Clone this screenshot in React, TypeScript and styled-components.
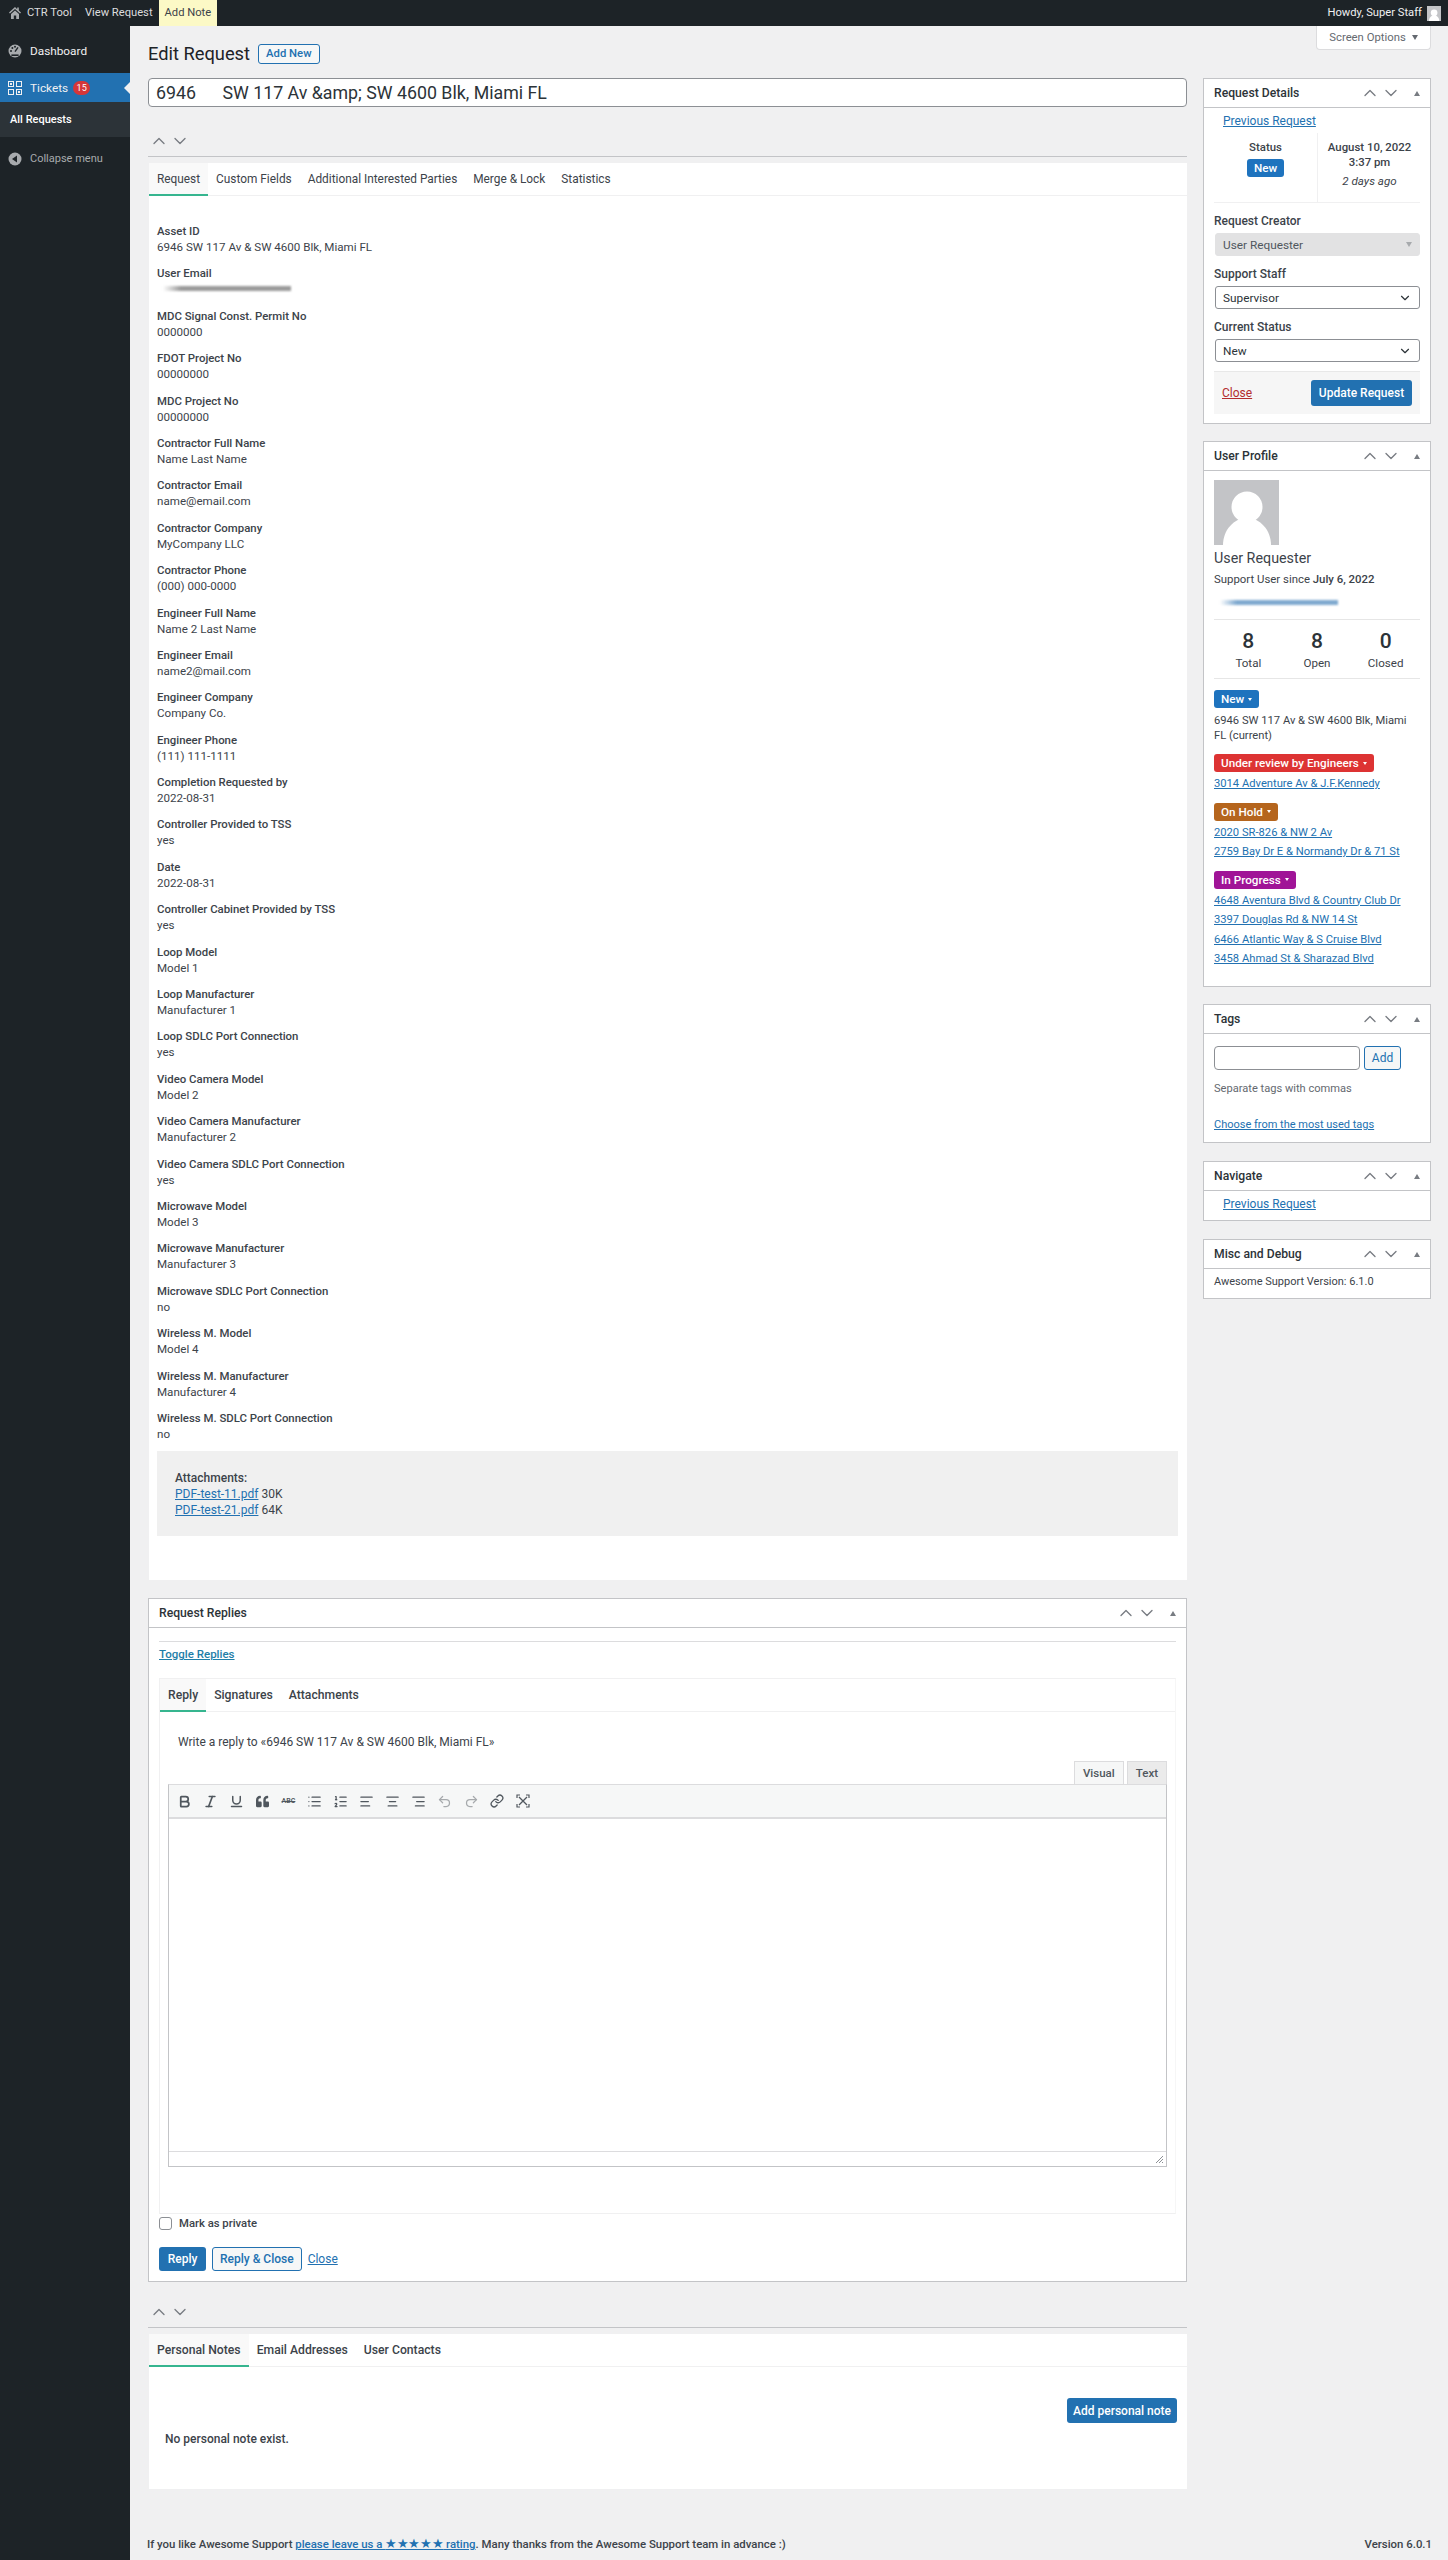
import React from 'react';
import styled, { createGlobalStyle } from 'styled-components';
import {
  AlignCenter,
  AlignLeft,
  AlignRight,
  Bold,
  ChevronDown,
  ChevronUp,
  Italic,
  Link as LinkIcon,
  List,
  ListOrdered,
  Redo2,
  Underline,
  Undo2
} from 'lucide-react';
import { FaQuoteLeft } from 'react-icons/fa';

const GlobalStyle = createGlobalStyle`
  html, body {
    margin: 0;
    padding: 0;
    background: #f0f0f1;
    color: #3c434a;
    font-family: Roboto, "Liberation Sans", sans-serif;
    font-size: 11.6px;
    line-height: 16px;
  }
  * { box-sizing: border-box; }
`;

const Page = styled.div`
  width: 1448px;
  height: 2560px;
  display: flex;
  flex-direction: column;
  overflow: hidden;
`;

const AdminBar = styled.div`
  height: 26px;
  flex: none;
  background: #1d2327;
  color: #f0f0f1;
  display: flex;
  align-items: stretch;
  padding-left: 8px;
  font-size: 11.2px;
`;

const BarItem = styled.div<{ $note?: boolean }>`
  display: flex;
  align-items: center;
  gap: 5px;
  padding: 0 6px;
  background: ${p => (p.$note ? '#fcf9c6' : 'transparent')};
  color: ${p => (p.$note ? '#3c434a' : '#dcdcde')};
`;

const BarHome = styled(BarItem)`
  padding: 0 7px 0 0;
`;

const BarRight = styled.div`
  margin-left: auto;
  display: flex;
  align-items: center;
  gap: 5px;
  padding-right: 7px;
  color: #f0f0f1;
`;

const BarAvatar = styled.div`
  width: 14px;
  height: 15px;
  background: #c3c4c7;
  display: flex;
  align-items: flex-end;
  justify-content: center;
  overflow: hidden;
`;

const Shell = styled.div`
  flex: 1;
  display: flex;
  min-height: 0;
`;

const Sidebar = styled.div`
  width: 130px;
  flex: none;
  background: #1d2327;
  color: #f0f0f1;
  font-size: 11.8px;
`;

const MenuItem = styled.div<{ $active?: boolean }>`
  position: relative;
  height: 29px;
  display: flex;
  align-items: center;
  gap: 8px;
  padding-left: 8px;
  background: ${p => (p.$active ? '#2271b1' : 'transparent')};
  color: #f0f0f1;
  margin-top: ${p => (p.$active ? '8px' : '10px')};
`;

const MenuNotch = styled.div`
  position: absolute;
  right: 0;
  top: 9px;
  border: 6px solid transparent;
  border-right-color: #f0f0f1;
  border-left-width: 0;
`;

const MenuBadge = styled.span`
  background: #d63638;
  color: #fff;
  font-size: 9px;
  line-height: 14px;
  width: 17px;
  height: 14px;
  border-radius: 7px;
  text-align: center;
  margin-left: -3px;
`;

const SubMenu = styled.div`
  height: 35px;
  background: #2c3338;
  display: flex;
  align-items: center;
  padding-left: 10px;
  color: #fff;
  font-weight: 500;
  font-size: 11px;
`;

const Collapse = styled.div`
  display: flex;
  align-items: center;
  gap: 8px;
  padding-left: 8px;
  margin-top: 12px;
  color: #a7aaad;
  height: 20px;
  font-size: 11px;
`;

const Main = styled.div`
  flex: 1;
  padding: 0 17px 0 18px;
  display: flex;
  flex-direction: column;
  min-width: 0;
`;

const TopRow = styled.div`
  height: 52px;
  display: flex;
  justify-content: space-between;
  align-items: flex-start;
`;

const TitleRow = styled.div`
  display: flex;
  align-items: center;
  gap: 8px;
  padding-top: 16px;
`;

const PageTitle = styled.h1`
  margin: 0;
  font-size: 18.3px;
  font-weight: 400;
  line-height: 23px;
  color: #1d2327;
`;

const OutlineButton = styled.div<{ $height?: number }>`
  height: ${p => p.$height ?? 20}px;
  padding: 0 7px;
  display: inline-flex;
  align-items: center;
  border: 1px solid #2271b1;
  border-radius: 3px;
  color: #2271b1;
  background: #f6f7f7;
  font-weight: 500;
  font-size: 12px;
`;

const AddNewButton = styled(OutlineButton)`
  font-size: 11.3px;
`;

const ScreenTab = styled.div`
  width: 115px;
  height: 24px;
  background: #fff;
  border: 1px solid #dcdcde;
  border-top: none;
  border-radius: 0 0 4px 4px;
  color: #646970;
  display: flex;
  align-items: center;
  justify-content: center;
  gap: 6px;
  font-size: 11.3px;
`;

const DownCaret = styled.span`
  width: 0;
  height: 0;
  border: 3.5px solid transparent;
  border-top: 5px solid #646970;
  border-bottom: 0;
`;

const Columns = styled.div`
  display: grid;
  grid-template-columns: 1039px 228px;
  column-gap: 16px;
  align-items: start;
`;

const Column = styled.div`
  display: flex;
  flex-direction: column;
  min-width: 0;
`;

const TitleInput = styled.div`
  height: 29px;
  background: #fff;
  border: 1px solid #8c8f94;
  border-radius: 4px;
  padding: 0 7px;
  display: flex;
  align-items: center;
  font-size: 17.8px;
  color: #2c3338;
  white-space: pre;
`;

const HandleRow = styled.div<{ $height: number }>`
  height: ${p => p.$height}px;
  display: flex;
  align-items: flex-end;
  gap: 1px;
  padding: 0 0 5px 1px;
  border-bottom: 1px solid #c3c4c7;
  color: #787c82;
`;

const TabPanel = styled.div<{ $height?: number; $top?: number }>`
  margin: ${p => p.$top ?? 6}px 0 0 1px;
  background: #fff;
  height: ${p => (p.$height ? `${p.$height}px` : 'auto')};
`;

const TabBar = styled.div`
  height: 33px;
  display: flex;
  border-bottom: 1px solid #f0f0f1;
`;

const Tab = styled.div<{ $active?: boolean; $strong?: boolean }>`
  height: 33px;
  padding: 0 8px;
  display: flex;
  align-items: center;
  font-size: ${p => (p.$strong ? '12.2px' : '11.85px')};
  font-weight: ${p => (p.$strong ? 500 : 400)};
  background: ${p => (p.$active ? '#f9f9f9' : 'transparent')};
  border-bottom: 2px solid ${p => (p.$active ? '#36b58f' : 'transparent')};
`;

const FieldList = styled.div`
  padding: 27px 9px 44px 8px;
`;

const Field = styled.div`
  height: 42.4px;
`;

const FieldLabel = styled.div`
  font-weight: 500;
  font-size: 11.4px;
`;

const Smudge = styled.div<{ $tone: string; $width: number; $top: number }>`
  width: ${p => p.$width}px;
  height: 5px;
  margin: ${p => p.$top}px 0 0 6px;
  background: linear-gradient(90deg, transparent, ${p => p.$tone} 14%, ${p => p.$tone});
  filter: blur(1px);
`;

const AttachmentBox = styled.div`
  background: #f0f0f0;
  padding: 19px 18px 18px;
  margin-top: -1px;
  font-size: 12px;
`;

const AttachmentLabel = styled(FieldLabel)`
  font-size: 12px;
`;

const Link = styled.a`
  color: #2271b1;
  text-decoration: underline;
`;

const Postbox = styled.div<{ $top?: number }>`
  margin-top: ${p => p.$top ?? 0}px;
  background: #fff;
  border: 1px solid #c3c4c7;
`;

const PostboxHeader = styled.div`
  height: 29px;
  border-bottom: 1px solid #c3c4c7;
  display: flex;
  align-items: center;
  padding-left: 10px;
  font-weight: 500;
  font-size: 12.2px;
  color: #2c3338;
`;

const HandleActions = styled.div`
  margin-left: auto;
  display: flex;
  align-items: center;
  gap: 1px;
  color: #787c82;
  padding-right: 10px;
`;

const UpCaret = styled.span`
  width: 0;
  height: 0;
  margin-left: 12px;
  border: 3.5px solid transparent;
  border-bottom: 5px solid #787c82;
  border-top: 0;
`;

const RepliesBody = styled.div`
  padding: 13px 10px 0 10px;
`;

const ThinRule = styled.div`
  height: 1px;
  background: #dcdcde;
`;

const ToggleLink = styled(Link)`
  display: block;
  margin-top: 4px;
  height: 17px;
  line-height: 17px;
  font-weight: 500;
  color: #1e7ea8;
  font-size: 11.5px;
`;

const ReplyTabs = styled.div`
  margin-top: 15px;
  height: 536px;
  border: 1px solid #f0f0f1;
  border-right-color: #f6f6f6;
`;

const ReplyIntro = styled.div`
  padding: 22px 0 0 18px;
  box-sizing: content-box;
  height: 16px;
  font-size: 12px;
`;

const EditorTabs = styled.div`
  display: flex;
  justify-content: flex-end;
  padding-right: 8px;
  margin-top: 11px;
  height: 23px;
  gap: 3px;
`;

const EditorTab = styled.div<{ $active?: boolean }>`
  height: 23px;
  padding: 0 8px;
  display: flex;
  align-items: center;
  font-weight: 500;
  font-size: 11.5px;
  color: #50575e;
  background: ${p => (p.$active ? '#f6f7f7' : '#ebebeb')};
  border: 1px solid #dcdcde;
  border-bottom: none;
`;

const Editor = styled.div`
  margin: 0 8px;
  height: 383px;
  border: 1px solid #c3c4c7;
  border-top: 1px solid #dcdcde;
  display: flex;
  flex-direction: column;
`;

const Toolbar = styled.div`
  height: 34px;
  flex: none;
  background: #f6f7f7;
  border-bottom: 2px solid #dcdcde;
  display: flex;
  align-items: center;
  padding-left: 2px;
  color: #50575e;
`;

const ToolButton = styled.div<{ $muted?: boolean }>`
  width: 26.1px;
  display: flex;
  align-items: center;
  justify-content: center;
  color: ${p => (p.$muted ? '#a7aaad' : '#50575e')};
`;

const StrikeText = styled.span`
  font-size: 7px;
  line-height: 10px;
  font-weight: 600;
  text-decoration: line-through;
`;

const EditorArea = styled.div`
  flex: 1;
  background: #fff;
`;

const StatusBar = styled.div`
  height: 15px;
  flex: none;
  border-top: 1px solid #dcdcde;
  display: flex;
  justify-content: flex-end;
  align-items: flex-end;
  padding: 0 2px 2px 0;
`;

const PrivateRow = styled.label`
  display: flex;
  align-items: center;
  gap: 7px;
  margin-top: 3px;
  height: 13px;
  font-weight: 500;
  font-size: 11.3px;
`;

const CheckBox = styled.span`
  width: 13px;
  height: 13px;
  border: 1px solid #8c8f94;
  border-radius: 3px;
  background: #fff;
`;

const ActionRow = styled.div`
  margin-top: 17px;
  padding-bottom: 10px;
  display: flex;
  align-items: center;
  gap: 6px;
`;

const ActionLink = styled(Link)`
  font-size: 12px;
`;

const PrimaryButton = styled.div<{ $height: number; $width: number }>`
  height: ${p => p.$height}px;
  width: ${p => p.$width}px;
  background: #2271b1;
  color: #fff;
  border-radius: 3px;
  display: flex;
  align-items: center;
  justify-content: center;
  font-weight: 500;
  font-size: 12px;
`;

const NotesBody = styled.div`
  height: 122px;
`;

const NotesToolbar = styled.div`
  display: flex;
  justify-content: flex-end;
  padding: 31px 10px 0 0;
`;

const NotesEmpty = styled.div`
  padding: 8px 0 0 16px;
  font-weight: 500;
  font-size: 12px;
`;

const Footer = styled.div`
  margin: 47px 0 0 -1px;
  width: 1285px;
  display: flex;
  justify-content: space-between;
  font-size: 11.4px;
  font-weight: 500;
`;

const Stars = styled.span`
  font-size: 13px;
  letter-spacing: -0.4px;
`;

const SideBody = styled.div<{ $height: number }>`
  padding: 0 10px;
  height: ${p => p.$height}px;
`;

const ProfileBody = styled(SideBody)`
  padding-top: 9px;
`;

const SideLink = styled(Link)`
  display: block;
  height: 26px;
  line-height: 26px;
  padding-left: 9px;
  font-size: 12px;
`;

const StatusGrid = styled.div`
  display: grid;
  grid-template-columns: 104px 103px;
  height: 70px;
  margin-top: -1px;
  border-bottom: 1px solid #f0f0f1;
`;

const StatusCell = styled.div<{ $divider?: boolean }>`
  text-align: center;
  padding-top: 7px;
  line-height: 15px;
  border-right: ${p => (p.$divider ? '1px solid #f0f0f1' : 'none')};
`;

const Strong = styled.div`
  font-weight: 500;
  font-size: 11.4px;
`;

const Muted = styled.div`
  font-style: italic;
  margin-top: 4px;
`;

const StatusBadge = styled.span<{ $tone: string }>`
  display: inline-flex;
  align-items: center;
  gap: 4px;
  height: 18px;
  padding: 0 7px;
  border-radius: 3px;
  background: ${p => p.$tone};
  color: #fff;
  font-weight: 500;
  font-size: 11.7px;
`;

const NewBadge = styled(StatusBadge)`
  margin-top: 4px;
`;

const TinyCaret = styled.span`
  width: 0;
  height: 0;
  border: 2px solid transparent;
  border-top: 3px solid #fff;
  border-bottom: 0;
`;

const SelectLabel = styled.div`
  font-weight: 500;
  font-size: 12px;
  margin-top: 10px;
`;

const SelectBox = styled.div<{ $disabled?: boolean }>`
  height: 23px;
  margin: 4px 0 0 1px;
  padding: 0 7px;
  display: flex;
  align-items: center;
  justify-content: space-between;
  border: 1px solid ${p => (p.$disabled ? '#e2e2e3' : '#8c8f94')};
  border-radius: 3px;
  background: ${p => (p.$disabled ? '#e2e2e3' : '#fff')};
  color: ${p => (p.$disabled ? '#50575e' : '#2c3338')};
  font-size: 11.8px;
`;

const DisabledCaret = styled(DownCaret)`
  border-top-color: #a7aaad;
`;

const SubmitRow = styled.div`
  margin-top: 9px;
  height: 43px;
  background: #f6f6f6;
  border-top: 1px solid #e8e8e8;
  display: flex;
  align-items: center;
  justify-content: space-between;
  padding: 0 8px;
`;

const CloseLink = styled(Link)`
  color: #b32d2e;
  font-size: 12px;
`;

const Avatar = styled.div`
  width: 65px;
  height: 65px;
  background: #c3c4c7;
`;

const ProfileName = styled.div`
  font-size: 14.3px;
  line-height: 18px;
  margin-top: 4px;
`;

const SinceLine = styled.div`
  margin-top: 4px;
  height: 16px;
  font-size: 11.4px;
`;

const StrongInline = styled.span`
  font-weight: 500;
`;

const StatsRow = styled.div`
  margin-top: 14px;
  height: 60px;
  border-top: 1px solid #e6e6e6;
  border-bottom: 1px solid #e6e6e6;
  display: grid;
  grid-template-columns: repeat(3, 1fr);
  text-align: center;
`;

const StatNumber = styled.div`
  font-size: 21px;
  line-height: 24px;
  font-weight: 500;
  margin-top: 9px;
  color: #2c3338;
`;

const StatLabel = styled.div`
  margin-top: 2px;
`;

const TicketGroup = styled.div`
  margin-top: 11px;
`;

const TicketText = styled.div`
  margin-top: 5px;
  line-height: 15px;
  font-size: 11.2px;
`;

const TicketLink = styled(Link)`
  display: block;
  margin-top: 4px;
  line-height: 15.5px;
  font-size: 11.2px;
`;

const TagRow = styled.div`
  display: flex;
  gap: 4px;
  padding-top: 12px;
`;

const TagInput = styled.div`
  width: 146px;
  height: 24px;
  background: #fff;
  border: 1px solid #8c8f94;
  border-radius: 4px;
`;

const TagButton = styled(OutlineButton)`
  height: 24px;
  width: 37px;
  justify-content: center;
  font-weight: 400;
`;

const HelpText = styled.div`
  margin-top: 11px;
  color: #646970;
  font-size: 11.1px;
`;

const TagsLink = styled(Link)`
  display: block;
  margin-top: 20px;
  font-size: 11px;
`;

const PlainLine = styled.div`
  padding-top: 5px;
  font-size: 11px;
`;

type FieldData = { label: string; value?: string };

const fields: FieldData[] = [
  { label: 'Asset ID', value: '6946 SW 117 Av & SW 4600 Blk, Miami FL' },
  { label: 'User Email' },
  { label: 'MDC Signal Const. Permit No', value: '0000000' },
  { label: 'FDOT Project No', value: '00000000' },
  { label: 'MDC Project No', value: '00000000' },
  { label: 'Contractor Full Name', value: 'Name Last Name' },
  { label: 'Contractor Email', value: 'name@email.com' },
  { label: 'Contractor Company', value: 'MyCompany LLC' },
  { label: 'Contractor Phone', value: '(000) 000-0000' },
  { label: 'Engineer Full Name', value: 'Name 2 Last Name' },
  { label: 'Engineer Email', value: 'name2@mail.com' },
  { label: 'Engineer Company', value: 'Company Co.' },
  { label: 'Engineer Phone', value: '(111) 111-1111' },
  { label: 'Completion Requested by', value: '2022-08-31' },
  { label: 'Controller Provided to TSS', value: 'yes' },
  { label: 'Date', value: '2022-08-31' },
  { label: 'Controller Cabinet Provided by TSS', value: 'yes' },
  { label: 'Loop Model', value: 'Model 1' },
  { label: 'Loop Manufacturer', value: 'Manufacturer 1' },
  { label: 'Loop SDLC Port Connection', value: 'yes' },
  { label: 'Video Camera Model', value: 'Model 2' },
  { label: 'Video Camera Manufacturer', value: 'Manufacturer 2' },
  { label: 'Video Camera SDLC Port Connection', value: 'yes' },
  { label: 'Microwave Model', value: 'Model 3' },
  { label: 'Microwave Manufacturer', value: 'Manufacturer 3' },
  { label: 'Microwave SDLC Port Connection', value: 'no' },
  { label: 'Wireless M. Model', value: 'Model 4' },
  { label: 'Wireless M. Manufacturer', value: 'Manufacturer 4' },
  { label: 'Wireless M. SDLC Port Connection', value: 'no' }
];

const ticketGroups = [
  { name: 'Under review by Engineers', tone: '#dd3333', links: ['3014 Adventure Av & J.F.Kennedy'] },
  { name: 'On Hold', tone: '#b5651d', links: ['2020 SR-826 & NW 2 Av', '2759 Bay Dr E & Normandy Dr & 71 St'] },
  {
    name: 'In Progress',
    tone: '#a01497',
    links: [
      '4648 Aventura Blvd & Country Club Dr',
      '3397 Douglas Rd & NW 14 St',
      '6466 Atlantic Way & S Cruise Blvd',
      '3458 Ahmad St & Sharazad Blvd'
    ]
  }
];

const HomeIcon = () => (
  <svg width="14" height="14" viewBox="0 0 14 14" fill="#a7aaad">
    <path d="M7 1 L1 6.6 L1.9 7.6 L7 3 L12.1 7.6 L13 6.6 L10.8 4.6 V1.6 H9.2 V3.2 Z" />
    <path d="M3 8 L7 4.4 L11 8 V13 H8.2 V9.6 H5.8 V13 H3 Z" />
  </svg>
);

const GaugeIcon = () => (
  <svg width="14" height="14" viewBox="0 0 14 14">
    <circle cx="7" cy="7" r="6.5" fill="#a7aaad" />
    <path d="M7 7.6 L10 3.4" stroke="#1d2327" strokeWidth="1.4" />
    <circle cx="3" cy="7" r="1" fill="#1d2327" />
    <circle cx="4.4" cy="4" r="1" fill="#1d2327" />
    <circle cx="7" cy="2.8" r="1" fill="#1d2327" />
    <path d="M3.4 11.2 H10.6" stroke="#1d2327" strokeWidth="1.6" />
  </svg>
);

const TicketsIcon = () => (
  <svg width="14" height="14" viewBox="0 0 14 14" fill="none" stroke="#f0f0f1" strokeWidth="1">
    <rect x="0.5" y="0.5" width="5" height="5" />
    <rect x="8.5" y="0.5" width="5" height="5" />
    <rect x="0.5" y="8.5" width="5" height="5" />
    <rect x="8.5" y="8.5" width="5" height="5" />
    <path d="M2 2 L4 4 M4 2 L2 4 M10 10 L12 12 M12 10 L10 12" />
  </svg>
);

const CollapseIcon = () => (
  <svg width="14" height="14" viewBox="0 0 14 14">
    <circle cx="7" cy="7" r="6.5" fill="#a7aaad" />
    <path d="M9 3.6 V10.4 L4 7 Z" fill="#1d2327" />
  </svg>
);

const FullscreenIcon = () => (
  <svg width="14" height="14" viewBox="0 0 14 14" fill="none" stroke="#50575e" strokeWidth="1.6">
    <path d="M3 3 L11 11 M11 3 L3 11" strokeWidth="1.3" />
    <path d="M1 4 V1 H4 M10 1 H13 V4 M13 10 V13 H10 M4 13 H1 V10" strokeWidth="1.2" />
  </svg>
);

const ResizeGrip = () => (
  <svg width="9" height="9" viewBox="0 0 9 9" fill="none" stroke="#8c8f94" strokeWidth="1">
    <path d="M1 8 L8 1 M4 8 L8 4 M7 8 L8 7" />
  </svg>
);

const PersonIcon = ({ size }: { size: number }) => (
  <svg width={size} height={size} viewBox="0 0 65 65">
    <rect width="65" height="65" fill="#c3c4c7" />
    <circle cx="33" cy="27" r="15.5" fill="#fff" />
    <path d="M9 65 C9 50 20 38 33 38 C46 38 57 50 57 65 Z" fill="#fff" />
  </svg>
);

const Handles = () => (
  <>
    <ChevronUp size={20} strokeWidth={1.6} />
    <ChevronDown size={20} strokeWidth={1.6} />
  </>
);

const BoxHandles = () => (
  <HandleActions>
    <Handles />
    <UpCaret />
  </HandleActions>
);

const App = () => {
  return (
    <Page>
      <GlobalStyle />
      <AdminBar>
        <BarHome>
          <HomeIcon />
          CTR Tool
        </BarHome>
        <BarItem>View Request</BarItem>
        <BarItem $note>Add Note</BarItem>
        <BarRight>
          Howdy, Super Staff
          <BarAvatar>
            <PersonIcon size={14} />
          </BarAvatar>
        </BarRight>
      </AdminBar>
      <Shell>
        <Sidebar>
          <MenuItem>
            <GaugeIcon />
            Dashboard
          </MenuItem>
          <MenuItem $active>
            <TicketsIcon />
            Tickets
            <MenuBadge>15</MenuBadge>
            <MenuNotch />
          </MenuItem>
          <SubMenu>All Requests</SubMenu>
          <Collapse>
            <CollapseIcon />
            Collapse menu
          </Collapse>
        </Sidebar>
        <Main>
          <TopRow>
            <TitleRow>
              <PageTitle>Edit Request</PageTitle>
              <AddNewButton>Add New</AddNewButton>
            </TitleRow>
            <ScreenTab>
              Screen Options
              <DownCaret />
            </ScreenTab>
          </TopRow>
          <Columns>
            <Column>
              <TitleInput>6946      SW 117 Av &amp;amp; SW 4600 Blk, Miami FL</TitleInput>
              <HandleRow $height={50}>
                <Handles />
              </HandleRow>
              <TabPanel>
                <TabBar>
                  <Tab $active>Request</Tab>
                  <Tab>Custom Fields</Tab>
                  <Tab>Additional Interested Parties</Tab>
                  <Tab>Merge &amp; Lock</Tab>
                  <Tab>Statistics</Tab>
                </TabBar>
                <FieldList>
                  {fields.map(field => (
                    <Field key={field.label}>
                      <FieldLabel>{field.label}</FieldLabel>
                      {field.value ? (
                        <div>{field.value}</div>
                      ) : (
                        <Smudge $tone="#9a9a9a" $width={128} $top={5} />
                      )}
                    </Field>
                  ))}
                  <AttachmentBox>
                    <AttachmentLabel>Attachments:</AttachmentLabel>
                    <div>
                      <Link>PDF-test-11.pdf</Link> 30K
                    </div>
                    <div>
                      <Link>PDF-test-21.pdf</Link> 64K
                    </div>
                  </AttachmentBox>
                </FieldList>
              </TabPanel>
              <Postbox $top={18}>
                <PostboxHeader>
                  Request Replies
                  <BoxHandles />
                </PostboxHeader>
                <RepliesBody>
                  <ThinRule />
                  <ToggleLink>Toggle Replies</ToggleLink>
                  <ReplyTabs>
                    <TabBar>
                      <Tab $active $strong>Reply</Tab>
                      <Tab $strong>Signatures</Tab>
                      <Tab $strong>Attachments</Tab>
                    </TabBar>
                    <ReplyIntro>Write a reply to «6946 SW 117 Av &amp; SW 4600 Blk, Miami FL»</ReplyIntro>
                    <EditorTabs>
                      <EditorTab $active>Visual</EditorTab>
                      <EditorTab>Text</EditorTab>
                    </EditorTabs>
                    <Editor>
                      <Toolbar>
                        <ToolButton><Bold size={15} strokeWidth={2.8} /></ToolButton>
                        <ToolButton><Italic size={15} strokeWidth={2.6} /></ToolButton>
                        <ToolButton><Underline size={15} strokeWidth={2.4} /></ToolButton>
                        <ToolButton><FaQuoteLeft size={13} /></ToolButton>
                        <ToolButton><StrikeText>ABC</StrikeText></ToolButton>
                        <ToolButton><List size={15} /></ToolButton>
                        <ToolButton><ListOrdered size={15} /></ToolButton>
                        <ToolButton><AlignLeft size={15} strokeWidth={2} /></ToolButton>
                        <ToolButton><AlignCenter size={15} strokeWidth={2} /></ToolButton>
                        <ToolButton><AlignRight size={15} strokeWidth={2} /></ToolButton>
                        <ToolButton $muted><Undo2 size={15} /></ToolButton>
                        <ToolButton $muted><Redo2 size={15} /></ToolButton>
                        <ToolButton><LinkIcon size={14} strokeWidth={2.2} /></ToolButton>
                        <ToolButton><FullscreenIcon /></ToolButton>
                      </Toolbar>
                      <EditorArea />
                      <StatusBar><ResizeGrip /></StatusBar>
                    </Editor>
                  </ReplyTabs>
                  <PrivateRow>
                    <CheckBox />
                    Mark as private
                  </PrivateRow>
                  <ActionRow>
                    <PrimaryButton $height={24} $width={47}>Reply</PrimaryButton>
                    <OutlineButton $height={24}>Reply &amp; Close</OutlineButton>
                    <ActionLink>Close</ActionLink>
                  </ActionRow>
                </RepliesBody>
              </Postbox>
              <HandleRow $height={46}>
                <Handles />
              </HandleRow>
              <TabPanel $height={155}>
                <TabBar>
                  <Tab $active $strong>Personal Notes</Tab>
                  <Tab $strong>Email Addresses</Tab>
                  <Tab $strong>User Contacts</Tab>
                </TabBar>
                <NotesBody>
                  <NotesToolbar>
                    <PrimaryButton $height={25} $width={110}>Add personal note</PrimaryButton>
                  </NotesToolbar>
                  <NotesEmpty>No personal note exist.</NotesEmpty>
                </NotesBody>
              </TabPanel>
              <Footer>
                <span>
                  If you like Awesome Support <Link>please leave us a <Stars>★★★★★</Stars> rating</Link>. Many thanks from the Awesome Support team in advance :)
                </span>
                <span>Version 6.0.1</span>
              </Footer>
            </Column>
            <Column>
              <Postbox>
                <PostboxHeader>
                  Request Details
                  <BoxHandles />
                </PostboxHeader>
                <SideBody $height={315}>
                  <SideLink>Previous Request</SideLink>
                  <StatusGrid>
                    <StatusCell $divider>
                      <Strong>Status</Strong>
                      <NewBadge $tone="#1e73be">New</NewBadge>
                    </StatusCell>
                    <StatusCell>
                      <Strong>August 10, 2022</Strong>
                      <Strong>3:37 pm</Strong>
                      <Muted>2 days ago</Muted>
                    </StatusCell>
                  </StatusGrid>
                  <SelectLabel>Request Creator</SelectLabel>
                  <SelectBox $disabled>User Requester<DisabledCaret /></SelectBox>
                  <SelectLabel>Support Staff</SelectLabel>
                  <SelectBox>Supervisor<ChevronDown size={14} /></SelectBox>
                  <SelectLabel>Current Status</SelectLabel>
                  <SelectBox>New<ChevronDown size={14} /></SelectBox>
                  <SubmitRow>
                    <CloseLink>Close</CloseLink>
                    <PrimaryButton $height={26} $width={101}>Update Request</PrimaryButton>
                  </SubmitRow>
                </SideBody>
              </Postbox>
              <Postbox $top={17}>
                <PostboxHeader>
                  User Profile
                  <BoxHandles />
                </PostboxHeader>
                <ProfileBody $height={515}>
                  <Avatar><PersonIcon size={65} /></Avatar>
                  <ProfileName>User Requester</ProfileName>
                  <SinceLine>Support User since <StrongInline>July 6, 2022</StrongInline></SinceLine>
                  <Smudge $tone="#7fa9cf" $width={118} $top={13} />
                  <StatsRow>
                    <div><StatNumber>8</StatNumber><StatLabel>Total</StatLabel></div>
                    <div><StatNumber>8</StatNumber><StatLabel>Open</StatLabel></div>
                    <div><StatNumber>0</StatNumber><StatLabel>Closed</StatLabel></div>
                  </StatsRow>
                  <TicketGroup>
                    <StatusBadge $tone="#1e73be">New <TinyCaret /></StatusBadge>
                    <TicketText>6946 SW 117 Av &amp; SW 4600 Blk, Miami FL (current)</TicketText>
                  </TicketGroup>
                  {ticketGroups.map(group => (
                    <TicketGroup key={group.name}>
                      <StatusBadge $tone={group.tone}>{group.name} <TinyCaret /></StatusBadge>
                      {group.links.map(link => (
                        <TicketLink key={link}>{link}</TicketLink>
                      ))}
                    </TicketGroup>
                  ))}
                </ProfileBody>
              </Postbox>
              <Postbox $top={17}>
                <PostboxHeader>
                  Tags
                  <BoxHandles />
                </PostboxHeader>
                <SideBody $height={108}>
                  <TagRow>
                    <TagInput />
                    <TagButton>Add</TagButton>
                  </TagRow>
                  <HelpText>Separate tags with commas</HelpText>
                  <TagsLink>Choose from the most used tags</TagsLink>
                </SideBody>
              </Postbox>
              <Postbox $top={18}>
                <PostboxHeader>
                  Navigate
                  <BoxHandles />
                </PostboxHeader>
                <SideBody $height={29}>
                  <SideLink>Previous Request</SideLink>
                </SideBody>
              </Postbox>
              <Postbox $top={18}>
                <PostboxHeader>
                  Misc and Debug
                  <BoxHandles />
                </PostboxHeader>
                <SideBody $height={29}>
                  <PlainLine>Awesome Support Version: 6.1.0</PlainLine>
                </SideBody>
              </Postbox>
            </Column>
          </Columns>
        </Main>
      </Shell>
    </Page>
  );
};

export default App;
